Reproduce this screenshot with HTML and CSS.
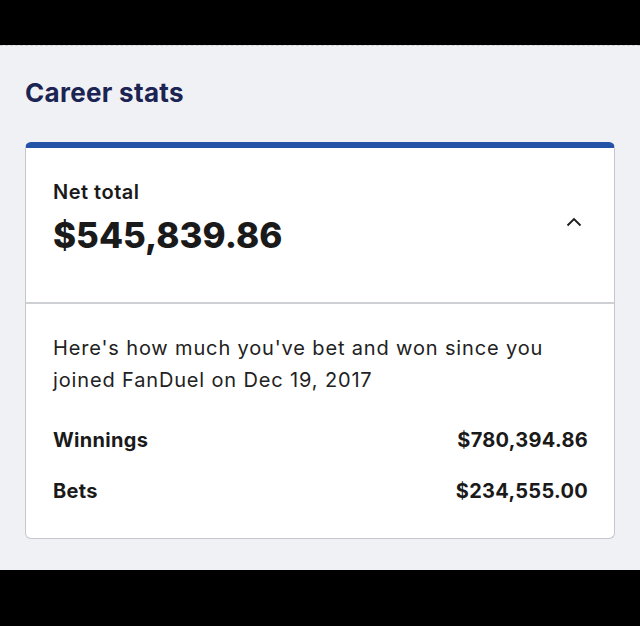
FILE: index.html
```html
<!DOCTYPE html>
<html>
<head>
<meta charset="utf-8">
<link rel="stylesheet" href="styles.css">
</head>
<body>
<div class="band band-top"></div>
<main class="page">
  <h1 class="title">Career stats</h1>
  <section class="card">
    <div class="card-head">
      <div class="head-text">
        <div class="label">Net total</div>
        <div class="total">$545,839.86</div>
      </div>
      <svg class="chevron" width="16" height="10" viewBox="0 0 16 10"><path d="M1.5 8.5 L8 2 L14.5 8.5" fill="none" stroke="#1b1b1b" stroke-width="1.8"/></svg>
    </div>
    <div class="card-body">
      <p class="intro">Here's how much you've bet and won since you joined FanDuel on Dec 19, 2017</p>
      <div class="row"><span>Winnings</span><span>$780,394.86</span></div>
      <div class="row"><span>Bets</span><span>$234,555.00</span></div>
    </div>
  </section>
</main>
<div class="band band-bottom"></div>
</body>
</html>
```
FILE: styles.css
```css
html, body { margin: 0; padding: 0; background: #000; }
body { font-family: Inter, "Open Sans", sans-serif; color: #1a1a1a; width: 640px; height: 626px; overflow: hidden; }
.band-top { height: 45px; background: #000; }
.band-bottom { height: 56px; background: #000; }
.page { background: #f0f1f5; height: 525px; padding: 0 25px; box-sizing: border-box; overflow: hidden; border-top: 1px dashed #d4d5da; }
.title { margin: 0; padding-top: 29px; font-size: 26px; line-height: 36px; font-weight: 700; color: #1b2452; letter-spacing: 0.3px; }
.card { margin-top: 31px; background: #fff; border: 1px solid #c6c7cc; border-top: 6px solid #2352a6; border-radius: 6px; }
.card-head { display: flex; justify-content: space-between; align-items: center; padding: 30px 32px 45px 27px; border-bottom: 2px solid #cfd0d4; }
.label { font-size: 20px; font-weight: 600; line-height: 28px; letter-spacing: 0.5px; }
.total { font-size: 35px; font-weight: 800; line-height: 44px; margin-top: 7px; }
.chevron { margin-top: 8px; }
.card-body { padding: 28px 26px 33px 27px; }
.intro { margin: 0; font-size: 20px; line-height: 32px; color: #222; letter-spacing: 0.85px; }
.row { display: flex; justify-content: space-between; font-size: 20px; font-weight: 700; line-height: 28px; margin-top: 30px; letter-spacing: 0.3px; }
.row + .row { margin-top: 23px; }
```
